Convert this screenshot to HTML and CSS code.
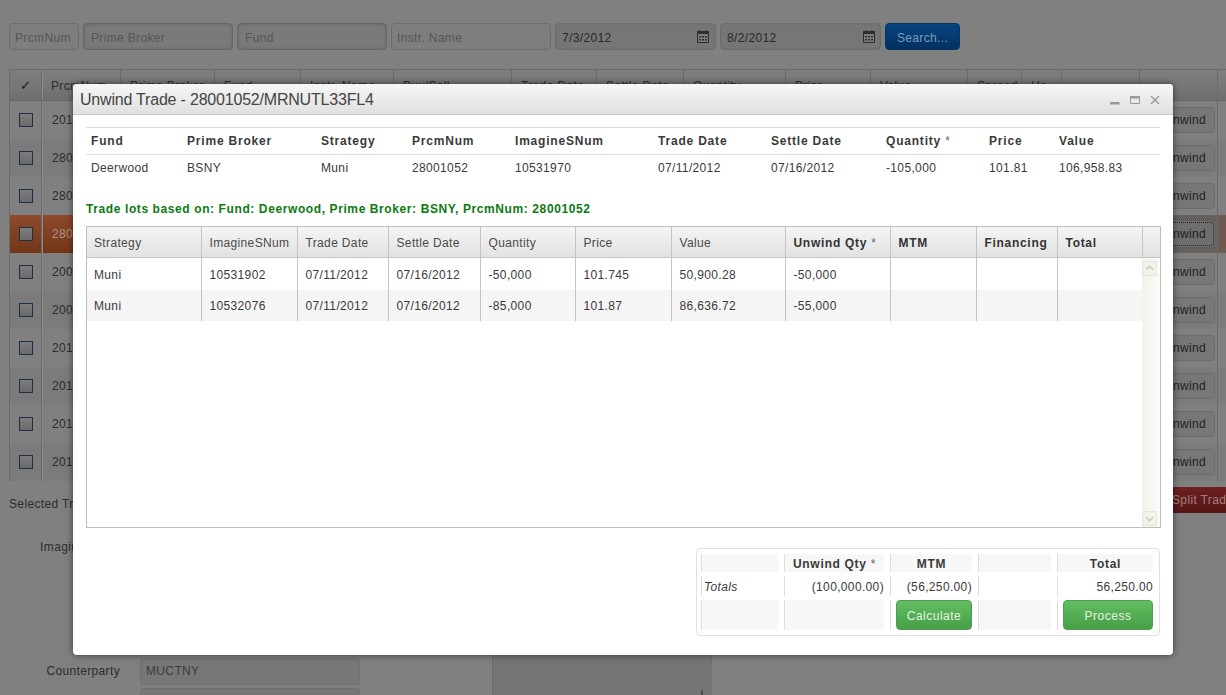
FILE: index.html
```html
<!DOCTYPE html>
<html lang="en">
<head>
<meta charset="utf-8">
<title>Unwind Trade</title>
<link rel="stylesheet" href="styles.css">
</head>
<body>
<main class="page">
  <form class="filters">
    <span class="filter f-prcm">PrcmNum</span>
    <span class="filter f-wide f-focus">Prime Broker</span>
    <span class="filter f-wide f-focus">Fund</span>
    <span class="filter f-instr">Instr. Name</span>
    <span class="filter f-date">7/3/2012
      <svg class="cal cal-first" viewBox="0 0 14 15"><path d="M1.500 2.500h11v11h-11z" fill="#7c7c7c" stroke="#2e2e2e"/><path d="M1 2h12v3H1z" fill="#2e2e2e"/><path d="M4 1v2M10 1v2" stroke="#2e2e2e"/><path d="M3 7h2v1.500H3zM6 7h2v1.500H6zM9 7h2v1.500H9zM3 10h2v1.500H3zM6 10h2v1.500H6zM9 10h2v1.500H9z" fill="#2e2e2e"/></svg>
    </span>
    <span class="filter f-date">8/2/2012
      <svg class="cal" viewBox="0 0 14 15"><path d="M1.500 2.500h11v11h-11z" fill="#7c7c7c" stroke="#2e2e2e"/><path d="M1 2h12v3H1z" fill="#2e2e2e"/><path d="M4 1v2M10 1v2" stroke="#2e2e2e"/><path d="M3 7h2v1.500H3zM6 7h2v1.500H6zM9 7h2v1.500H9zM3 10h2v1.500H3zM6 10h2v1.500H6zM9 10h2v1.500H9z" fill="#2e2e2e"/></svg>
    </span>
    <span class="search">Search...</span>
  </form>

  <section class="bg-grid">
    <div class="bg-row bg-head">
      <div class="bg-cell bg-check">✓</div><div class="bg-cell">PrcmNum</div><div class="bg-cell">Prime Broker</div><div class="bg-cell">Fund</div><div class="bg-cell">Instr. Name</div><div class="bg-cell">Buy/Sell</div><div class="bg-cell">Trade Date</div><div class="bg-cell">Settle Date</div><div class="bg-cell">Quantity</div><div class="bg-cell">Price</div><div class="bg-cell">Value</div><div class="bg-cell">Spread</div><div class="bg-cell">Ha</div><div class="bg-cell"></div><div class="bg-cell"></div><div class="bg-cell"></div>
    </div>
    <div class="bg-row"><div class="bg-cell bg-check"><i class="box"></i></div><div class="bg-cell bg-span">201</div><div class="bg-cell bg-action"><b class="unwind">Unwind</b></div><div class="bg-cell"></div></div>
    <div class="bg-row bg-alt"><div class="bg-cell bg-check"><i class="box"></i></div><div class="bg-cell bg-span">280</div><div class="bg-cell bg-action"><b class="unwind">Unwind</b></div><div class="bg-cell"></div></div>
    <div class="bg-row"><div class="bg-cell bg-check"><i class="box"></i></div><div class="bg-cell bg-span">280</div><div class="bg-cell bg-action"><b class="unwind">Unwind</b></div><div class="bg-cell"></div></div>
    <div class="bg-row bg-selected"><div class="bg-cell bg-check"><i class="box"></i></div><div class="bg-cell bg-span">280</div><div class="bg-cell bg-action"><b class="unwind unwind-focus">Unwind</b></div><div class="bg-cell bg-strip"></div></div>
    <div class="bg-row"><div class="bg-cell bg-check"><i class="box"></i></div><div class="bg-cell bg-span">200</div><div class="bg-cell bg-action"><b class="unwind">Unwind</b></div><div class="bg-cell"></div></div>
    <div class="bg-row bg-alt"><div class="bg-cell bg-check"><i class="box"></i></div><div class="bg-cell bg-span">200</div><div class="bg-cell bg-action"><b class="unwind">Unwind</b></div><div class="bg-cell"></div></div>
    <div class="bg-row"><div class="bg-cell bg-check"><i class="box"></i></div><div class="bg-cell bg-span">201</div><div class="bg-cell bg-action"><b class="unwind">Unwind</b></div><div class="bg-cell"></div></div>
    <div class="bg-row bg-alt"><div class="bg-cell bg-check"><i class="box"></i></div><div class="bg-cell bg-span">201</div><div class="bg-cell bg-action"><b class="unwind">Unwind</b></div><div class="bg-cell"></div></div>
    <div class="bg-row"><div class="bg-cell bg-check"><i class="box"></i></div><div class="bg-cell bg-span">201</div><div class="bg-cell bg-action"><b class="unwind">Unwind</b></div><div class="bg-cell"></div></div>
    <div class="bg-row bg-alt"><div class="bg-cell bg-check"><i class="box"></i></div><div class="bg-cell bg-span">201</div><div class="bg-cell bg-action"><b class="unwind">Unwind</b></div><div class="bg-cell"></div></div>
  </section>

  <div class="selected-bar">
    <span class="selected-text">Selected Trade</span>
    <span class="split">Split Trade</span>
  </div>

  <section class="detail">
    <div class="detail-form">
      <label class="lbl">ImagineSNum</label><span class="field"></span>
      <span class="lbl"></span><span class="field-tall"></span>
      <label class="lbl">Counterparty</label><span class="field">MUCTNY</span>
      <span class="lbl"></span><span class="field"></span>
    </div>
    <div class="detail-panel"><i class="grip"></i></div>
  </section>
</main>

<section class="modal" role="dialog">
  <header class="modal-title">
    <h1>Unwind Trade - 28001052/MRNUTL33FL4</h1>
    <div class="win-icons">
      <svg class="win-icon" viewBox="0 0 10 10"><path d="M0 7h9.500v2.500H0z" fill="#999"/></svg>
      <svg class="win-icon" viewBox="0 0 10 10"><path d="M.5 1.500h9v7h-9z" fill="none" stroke="#999"/><path d="M0 1h10v2.500H0z" fill="#999"/></svg>
      <svg class="win-icon" viewBox="0 0 10 10"><path d="M1 1l8 8M9 1l-8 8" fill="none" stroke="#999" stroke-width="1.400"/></svg>
    </div>
  </header>
  <div class="modal-body">
    <table class="summary">
      <thead>
        <tr><th class="s1">Fund</th><th class="s2">Prime Broker</th><th class="s3">Strategy</th><th class="s4">PrcmNum</th><th class="s5">ImagineSNum</th><th class="s6">Trade Date</th><th class="s7">Settle Date</th><th class="s8">Quantity <span class="star">*</span></th><th class="s9">Price</th><th>Value</th></tr>
      </thead>
      <tbody>
        <tr><td>Deerwood</td><td>BSNY</td><td>Muni</td><td>28001052</td><td>10531970</td><td>07/11/2012</td><td>07/16/2012</td><td>-105,000</td><td>101.81</td><td>106,958.83</td></tr>
      </tbody>
    </table>

    <p class="lots-note">Trade lots based on: Fund: Deerwood, Prime Broker: BSNY, PrcmNum: 28001052</p>

    <div class="lots">
      <table class="lots-head">
        <tr>
          <th class="c1">Strategy</th><th class="c2">ImagineSNum</th><th class="c3">Trade Date</th><th class="c4">Settle Date</th><th class="c5">Quantity</th><th class="c6">Price</th><th class="c7">Value</th><th class="c8 strong">Unwind Qty <span class="star">*</span></th><th class="c9 strong">MTM</th><th class="c10 strong">Financing</th><th class="c11 strong">Total</th><th class="c12"></th>
        </tr>
      </table>
      <div class="lots-main">
        <table class="lots-rows">
          <tr><td class="c1">Muni</td><td class="c2">10531902</td><td class="c3">07/11/2012</td><td class="c4">07/16/2012</td><td class="c5">-50,000</td><td class="c6">101.745</td><td class="c7">50,900.28</td><td class="c8">-50,000</td><td class="c9"></td><td class="c10"></td><td class="c11 last"></td></tr>
          <tr class="alt"><td class="c1">Muni</td><td class="c2">10532076</td><td class="c3">07/11/2012</td><td class="c4">07/16/2012</td><td class="c5">-85,000</td><td class="c6">101.87</td><td class="c7">86,636.72</td><td class="c8">-55,000</td><td class="c9"></td><td class="c10"></td><td class="c11 last"></td></tr>
        </table>
        <div class="scrollbar">
          <span class="sb-btn"><svg viewBox="0 0 15 15"><path d="M3.500 9l4-4 4 4" fill="none" stroke="#c6c6bc" stroke-width="1.600"/></svg></span>
          <span class="sb-btn"><svg viewBox="0 0 15 15"><path d="M3.500 6l4 4 4-4" fill="none" stroke="#c6c6bc" stroke-width="1.600"/></svg></span>
        </div>
      </div>
    </div>

    <div class="totals-wrap">
      <div class="totals">
        <div class="t-cell t-head"></div>
        <div class="t-cell t-head">Unwind Qty <span class="star">*</span></div>
        <div class="t-cell t-head">MTM</div>
        <div class="t-cell t-head"></div>
        <div class="t-cell t-head">Total</div>

        <div class="t-cell t-label">Totals</div>
        <div class="t-cell t-num">(100,000.00)</div>
        <div class="t-cell t-num">(56,250.00)</div>
        <div class="t-cell"></div>
        <div class="t-cell t-num">56,250.00</div>

        <div class="t-cell t-fill"></div>
        <div class="t-cell t-fill"></div>
        <div class="t-cell t-btn"><button type="button" class="green">Calculate</button></div>
        <div class="t-cell t-fill"></div>
        <div class="t-cell t-btn"><button type="button" class="green">Process</button></div>
      </div>
    </div>
  </div>
</section>
</body>
</html>
```
FILE: styles.css
```css
* { box-sizing: border-box; }
html, body { margin: 0; height: 100%; overflow: hidden; }
body {
  background: #808080;
  font-family: "Liberation Sans", Arial, sans-serif;
  font-size: 12px;
  letter-spacing: .35px;
  color: #2c2c2c;
  width: 1226px;
  height: 695px;
  position: relative;
}
.page { height: 695px; overflow: hidden; }

/* Dimmed page behind the dialog */
.filters { display: flex; gap: 4px; padding: 23px 0 0 9px; height: 69px; }
.filter {
  height: 27px; line-height: 28px; padding: 0 5px;
  border: 1px solid #6d6d6d; border-radius: 4px;
  background: #7e7e7e; color: #565656; position: relative;
}
.f-prcm { width: 70px; }
.f-wide { width: 150px; }
.f-focus { box-shadow: inset 0 0 3px #606060; border-color: #666; background: #7a7a7a; padding-left: 7px; }
.f-instr { width: 160px; }
.f-date { width: 161px; padding-left: 6px; color: #282828; background: #767676; box-shadow: inset 0 0 2px #6a6a6a; }
.cal { position: absolute; right: 4px; top: 5px; width: 14px; height: 15px; }
.cal-first { right: 5px; }
.search {
  width: 75px; height: 27px; line-height: 28px; text-align: center;
  border: 1px solid #053662; border-radius: 4px;
  background: linear-gradient(#064580, #043060); color: #7a9cba;
}

.bg-grid { margin-left: 9px; border-top: 1px solid #6b6b6b; border-left: 1px solid #6b6b6b; width: 1217px; }
.bg-row {
  display: grid; height: 38px; align-items: stretch;
  grid-template-columns: 32px 1098px 78px 6px;
}
.bg-head {
  height: 31px; background: linear-gradient(#7f7f7f, #6f6f6f);
  grid-template-columns: 32px 79px 94px 86px 93px 118px 85px 87px 102px 85px 97px 54px 40px 78px 78px 6px;
  border-bottom: 1px solid #666;
}
.bg-alt { background: #7b7b7b; }
.bg-selected { background: linear-gradient(#8e4a2c, #743618); color: #a89286; }
.bg-cell {
  display: flex; align-items: center; padding-left: 9px;
  border-right: 1px solid #6b6b6b; white-space: nowrap; overflow: hidden;
}
.bg-head .bg-cell { padding-top: 2px; }
.bg-check { justify-content: center; padding: 0; box-shadow: 1px 0 0 #8a8a8a; }
.bg-head .bg-check { font-size: 13px; color: #1c1c1c; padding: 0; }
.bg-span { padding-left: 10px; }
.bg-action { justify-content: flex-end; padding: 0 2px 0 0; }
.bg-selected .bg-action { background: #65615e; }
.bg-selected .unwind { background: #6e6e6e; }
.bg-strip { background: #6f5a50; }
.box {
  display: block; width: 14px; height: 14px;
  border: 1px solid #1e2f48; background: linear-gradient(#7d7d7d, #6a6a6a);
}
.unwind {
  font-weight: normal; display: block; width: 60px; height: 26px; line-height: 24px; text-align: center;
  border: 1px solid #6c6c6c; border-radius: 4px; background: #777; color: #202020;
}
.unwind-focus { outline: 1px dotted #222; outline-offset: -2px; }

.selected-bar { display: flex; justify-content: space-between; align-items: flex-end; height: 26px; margin-top: 6px; padding-left: 9px; }
.selected-text { line-height: 18px; margin-bottom: 0; }
.split {
  width: 80px; height: 26px; line-height: 26px; padding-left: 12px; margin-right: -14px; white-space: nowrap;
  background: linear-gradient(#6e2020, #561414); color: #a08080;
}

.detail { display: flex; margin-top: 21px; }
.detail-form {
  display: grid; grid-template-columns: 120px 220px; column-gap: 20px; row-gap: 3px;
  grid-template-rows: 27px 91px 27px 27px; width: 360px;
}
.lbl { line-height: 27px; text-align: right; white-space: nowrap; }
.field {
  height: 27px; line-height: 25px; padding: 0 5px;
  border: 1px solid #6f6f6f; border-radius: 3px; background: #777; color: #3c3c3c;
}
.field-tall { border: 1px solid #6f6f6f; border-radius: 3px; background: #777; }
.detail-panel {
  margin-left: 132px; width: 220px; height: 180px; position: relative;
  background: #757575; border-left: 1px solid #6a6a6a; border-right: 1px solid #717171;
}
.grip { position: absolute; right: 8px; bottom: 19px; width: 2px; height: 5px; background: #4f4f4f; }

/* Dialog */
.modal {
  position: absolute; left: 73px; top: 84px; width: 1100px; height: 571px;
  background: #fff; border-radius: 4px; box-shadow: 0 0 7px rgba(0,0,0,.55);
  display: flex; flex-direction: column; overflow: hidden; z-index: 2;
}
.modal-title {
  height: 31px; flex: none; display: flex; align-items: center; justify-content: space-between;
  padding: 2px 13px 0 7px; border-bottom: 1px solid #c8c8c8;
  background: linear-gradient(#f6f6f6, #e0e0e0);
}
.modal-title h1 { margin: 0; font-size: 16px; font-weight: normal; letter-spacing: -.2px; color: #444; }
.win-icons { display: flex; gap: 10px; }
.win-icon { width: 10px; height: 10px; display: block; }
.modal-body { padding: 12px 13px 0; flex: 1; min-height: 0; }

.summary { width: 1074px; border-collapse: collapse; table-layout: fixed; color: #3a3a3a; }
.summary th, .summary td { text-align: left; padding: 0 0 0 5px; height: 27px; }
.summary th { font-weight: bold; letter-spacing: .8px; border-top: 1px solid #ddd; border-bottom: 1px solid #ddd; }
.star { font-weight: normal; color: #666; }
.s1 { width: 96px; } .s2 { width: 134px; } .s3 { width: 91px; } .s4 { width: 103px; }
.s5 { width: 143px; } .s6 { width: 113px; } .s7 { width: 115px; } .s8 { width: 103px; } .s9 { width: 70px; }

.lots-note { margin: 19px 0 9px; height: 16px; line-height: 16px; font-weight: bold; color: #0b7a12; letter-spacing: .6px; }

.lots { width: 1075px; height: 302px; border: 1px solid #bdbdbd; }
.lots table { border-collapse: collapse; table-layout: fixed; }
.lots-head { width: 1073px; }
.lots-head th {
  height: 31px; padding: 2px 0 0 8px; text-align: left; font-weight: normal; color: #4a4a4a;
  background: linear-gradient(#f4f4f4, #e2e2e2); border-right: 1px solid #c4c4c4; border-bottom: 1px solid #c4c4c4;
  white-space: nowrap; overflow: hidden;
}
.lots-head th.c1 { padding-left: 7px; }
.lots-head th.strong { font-weight: bold; letter-spacing: .7px; color: #333; }
.lots-head th.c12 { border-right: 0; }
.lots-main { display: flex; height: 269px; }
.lots-rows { width: 1055px; height: 63px; flex: none; }
.lots-rows td { height: 31.500px; padding: 2px 0 0 8px; color: #3a3a3a; border-right: 1px solid #c4c4c4; }
.lots-rows td.c1 { padding-left: 7px; }
.lots-rows td.last { border-right: 0; }
.lots-rows .alt td { background: #f5f5f5; }
.c1 { width: 114px; } .c2 { width: 96px; } .c3 { width: 91px; } .c4 { width: 92px; } .c5 { width: 95px; }
.c6 { width: 96px; } .c7 { width: 114px; } .c8 { width: 105px; } .c9 { width: 86px; } .c10 { width: 81px; } .c11 { width: 85px; } .c12 { width: 18px; }

.scrollbar {
  flex: 1; display: flex; flex-direction: column; justify-content: space-between;
  padding: 3px 1px 1px 0; background: linear-gradient(90deg, #f3f3ec, #fbfbf8);
}
.sb-btn { display: block; width: 15px; height: 15px; background: #f2f2ea; border: 1px solid #e6e6dc; }
.sb-btn svg { display: block; width: 13px; height: 13px; }

.totals-wrap { display: flex; justify-content: flex-end; margin-top: 20px; }
.totals {
  width: 464px; height: 88px; padding: 5px 6px 5px 4px;
  border: 1px solid #e0e0e0; border-radius: 4px;
  display: grid; grid-template-columns: 77px 100px 82px 73px 96px; column-gap: 6px; row-gap: 4px;
  grid-template-rows: 18px 20px 30px; color: #3a3a3a;
}
.t-cell { border-left: 1px solid #ddd; }
.t-head { background: #f7f7f7; font-weight: bold; letter-spacing: .7px; text-align: center; line-height: 20px; }
.t-label { font-style: italic; line-height: 22px; padding-left: 2px; }
.t-num { text-align: right; line-height: 22px; }
.t-fill { background: #f7f7f7; }
.t-btn { padding-left: 5px; }
.green {
  display: block; width: 100%; height: 30px; padding: 2px 0 0; margin: 0;
  font: inherit; letter-spacing: .5px; color: #e4f2e4; cursor: pointer;
  border: 1px solid #4ba04b; border-radius: 4px;
  background: linear-gradient(#62bd62, #479f47);
}
```
